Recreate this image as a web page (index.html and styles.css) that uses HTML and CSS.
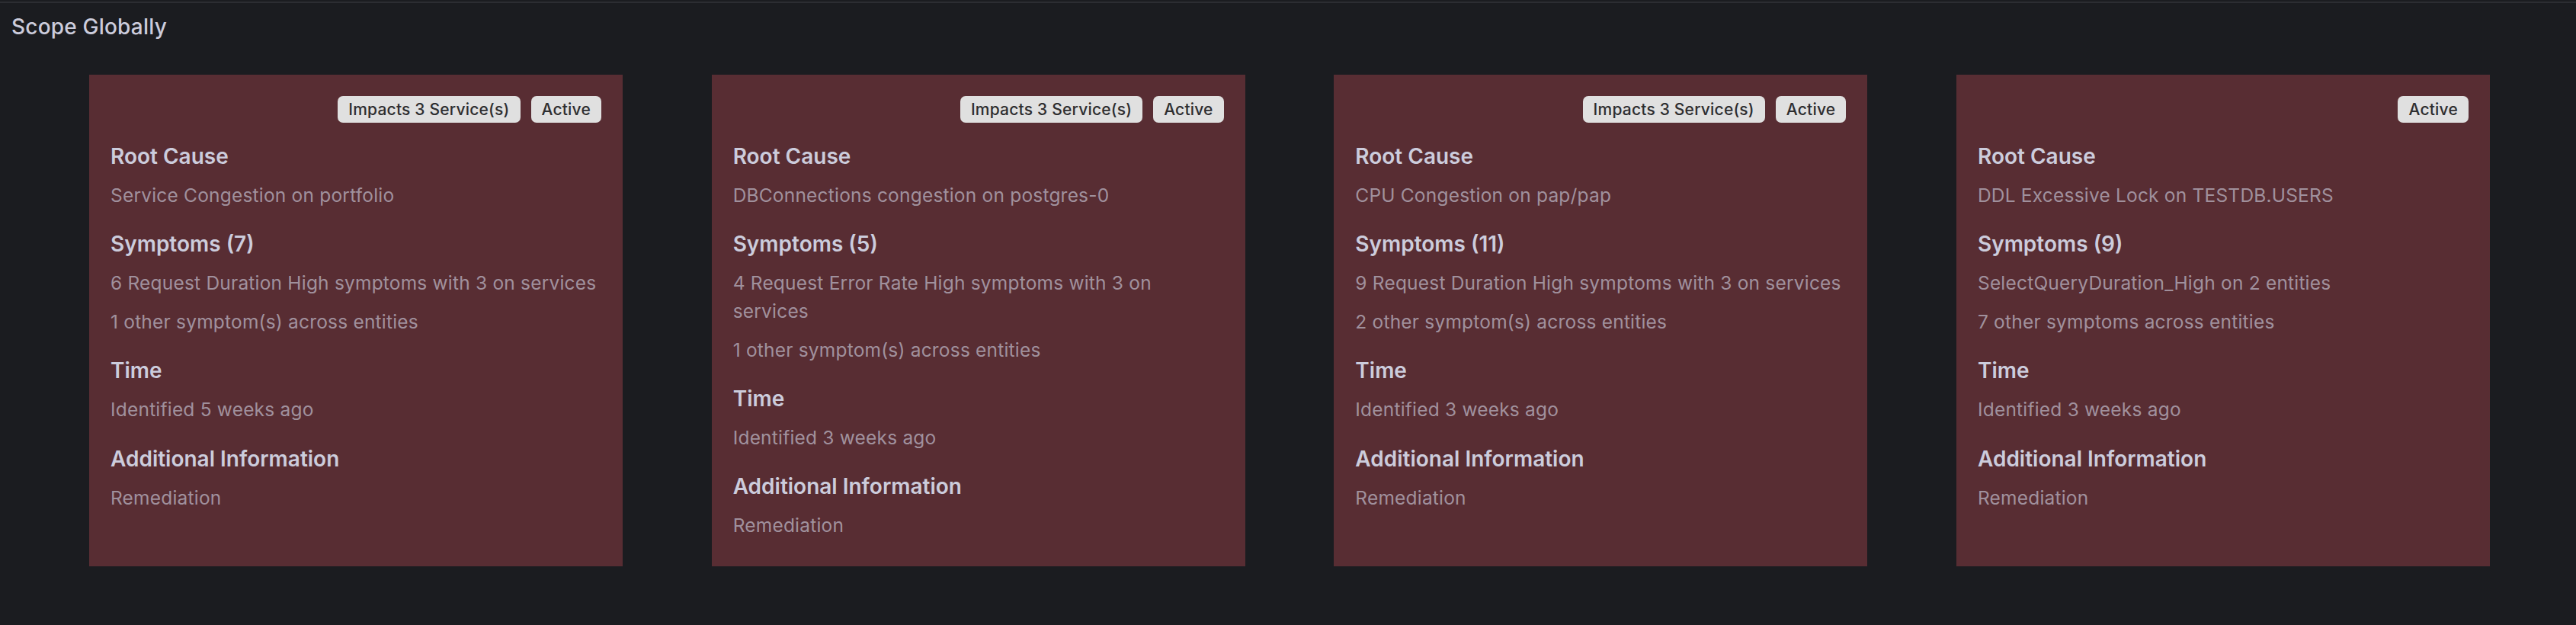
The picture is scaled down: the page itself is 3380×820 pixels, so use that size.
FILE: index.html
```html
<!DOCTYPE html>
<html lang="en">
<head>
<meta charset="utf-8">
<title>Scope Globally</title>
<link rel="stylesheet" href="styles.css">
</head>
<body>
<div class="topline"></div>
<header class="panel-title">Scope Globally</header>
<main class="cards">
  <article class="card">
    <div class="badges"><span class="badge">Impacts 3 Service(s)</span><span class="badge">Active</span></div>
    <section class="section"><h5 class="section-title">Root Cause</h5><p class="text">Service Congestion on portfolio</p></section>
    <section class="section"><h5 class="section-title">Symptoms (7)</h5><p class="text">6 Request Duration High symptoms with 3 on services</p><p class="text">1 other symptom(s) across entities</p></section>
    <section class="section"><h5 class="section-title">Time</h5><p class="text">Identified 5 weeks ago</p></section>
    <section class="section"><h5 class="section-title">Additional Information</h5><p class="text">Remediation</p></section>
  </article>
  <article class="card">
    <div class="badges"><span class="badge">Impacts 3 Service(s)</span><span class="badge">Active</span></div>
    <section class="section"><h5 class="section-title">Root Cause</h5><p class="text">DBConnections congestion on postgres-0</p></section>
    <section class="section"><h5 class="section-title">Symptoms (5)</h5><p class="text">4 Request Error Rate High symptoms with 3 on services</p><p class="text">1 other symptom(s) across entities</p></section>
    <section class="section"><h5 class="section-title">Time</h5><p class="text">Identified 3 weeks ago</p></section>
    <section class="section"><h5 class="section-title">Additional Information</h5><p class="text">Remediation</p></section>
  </article>
  <article class="card">
    <div class="badges"><span class="badge">Impacts 3 Service(s)</span><span class="badge">Active</span></div>
    <section class="section"><h5 class="section-title">Root Cause</h5><p class="text">CPU Congestion on pap/pap</p></section>
    <section class="section"><h5 class="section-title">Symptoms (11)</h5><p class="text">9 Request Duration High symptoms with 3 on services</p><p class="text">2 other symptom(s) across entities</p></section>
    <section class="section"><h5 class="section-title">Time</h5><p class="text">Identified 3 weeks ago</p></section>
    <section class="section"><h5 class="section-title">Additional Information</h5><p class="text">Remediation</p></section>
  </article>
  <article class="card">
    <div class="badges"><span class="badge">Active</span></div>
    <section class="section"><h5 class="section-title">Root Cause</h5><p class="text">DDL Excessive Lock on TESTDB.USERS</p></section>
    <section class="section"><h5 class="section-title">Symptoms (9)</h5><p class="text">SelectQueryDuration_High on 2 entities</p><p class="text">7 other symptoms across entities</p></section>
    <section class="section"><h5 class="section-title">Time</h5><p class="text">Identified 3 weeks ago</p></section>
    <section class="section"><h5 class="section-title">Additional Information</h5><p class="text">Remediation</p></section>
  </article>
</main>
</body>
</html>
```
FILE: styles.css
```css
html, body {
  margin: 0;
  padding: 0;
  background: #1b1c20;
  font-family: Inter, "Noto Sans", "Liberation Sans", sans-serif;
  color: #ccccdc;
}

.topline {
  height: 2px;
  margin-top: 2px;
  background: #2c2d32;
}

.panel-title {
  font-size: 28px;
  font-weight: 500;
  line-height: 42px;
  padding: 10px 15px 0;
  color: #ccccdc;
  letter-spacing: 0.2px;
}

.cards {
  display: flex;
  align-items: stretch;
  gap: 116.67px;
  padding-left: 117px;
  margin-top: 42px;
}

.card {
  box-sizing: border-box;
  width: 700px;
  flex: 0 0 700px;
  background: #582d33;
  padding: 28px 28px 35px;
}

.badges {
  display: flex;
  justify-content: flex-end;
  gap: 14px;
  margin-bottom: 23px;
}

.badge {
  display: inline-block;
  height: 35px;
  line-height: 35px;
  padding: 0 14px;
  border-radius: 7px;
  background: #e0e0e0;
  color: #2e2e30;
  font-size: 21px;
  font-weight: 500;
  letter-spacing: 0.2px;
}

.section {
  margin-bottom: 24.5px;
}

.section:last-child {
  margin-bottom: 0;
}

.section-title {
  margin: 0 0 12px;
  font-size: 28px;
  line-height: 42px;
  font-weight: 600;
  color: #ccccdc;
}

.text {
  margin: 0 0 14px;
  font-size: 24.5px;
  line-height: 36.75px;
  color: rgba(204, 204, 220, 0.65);
  letter-spacing: 0.2px;
}

.text:last-child {
  margin-bottom: 0;
}
```
